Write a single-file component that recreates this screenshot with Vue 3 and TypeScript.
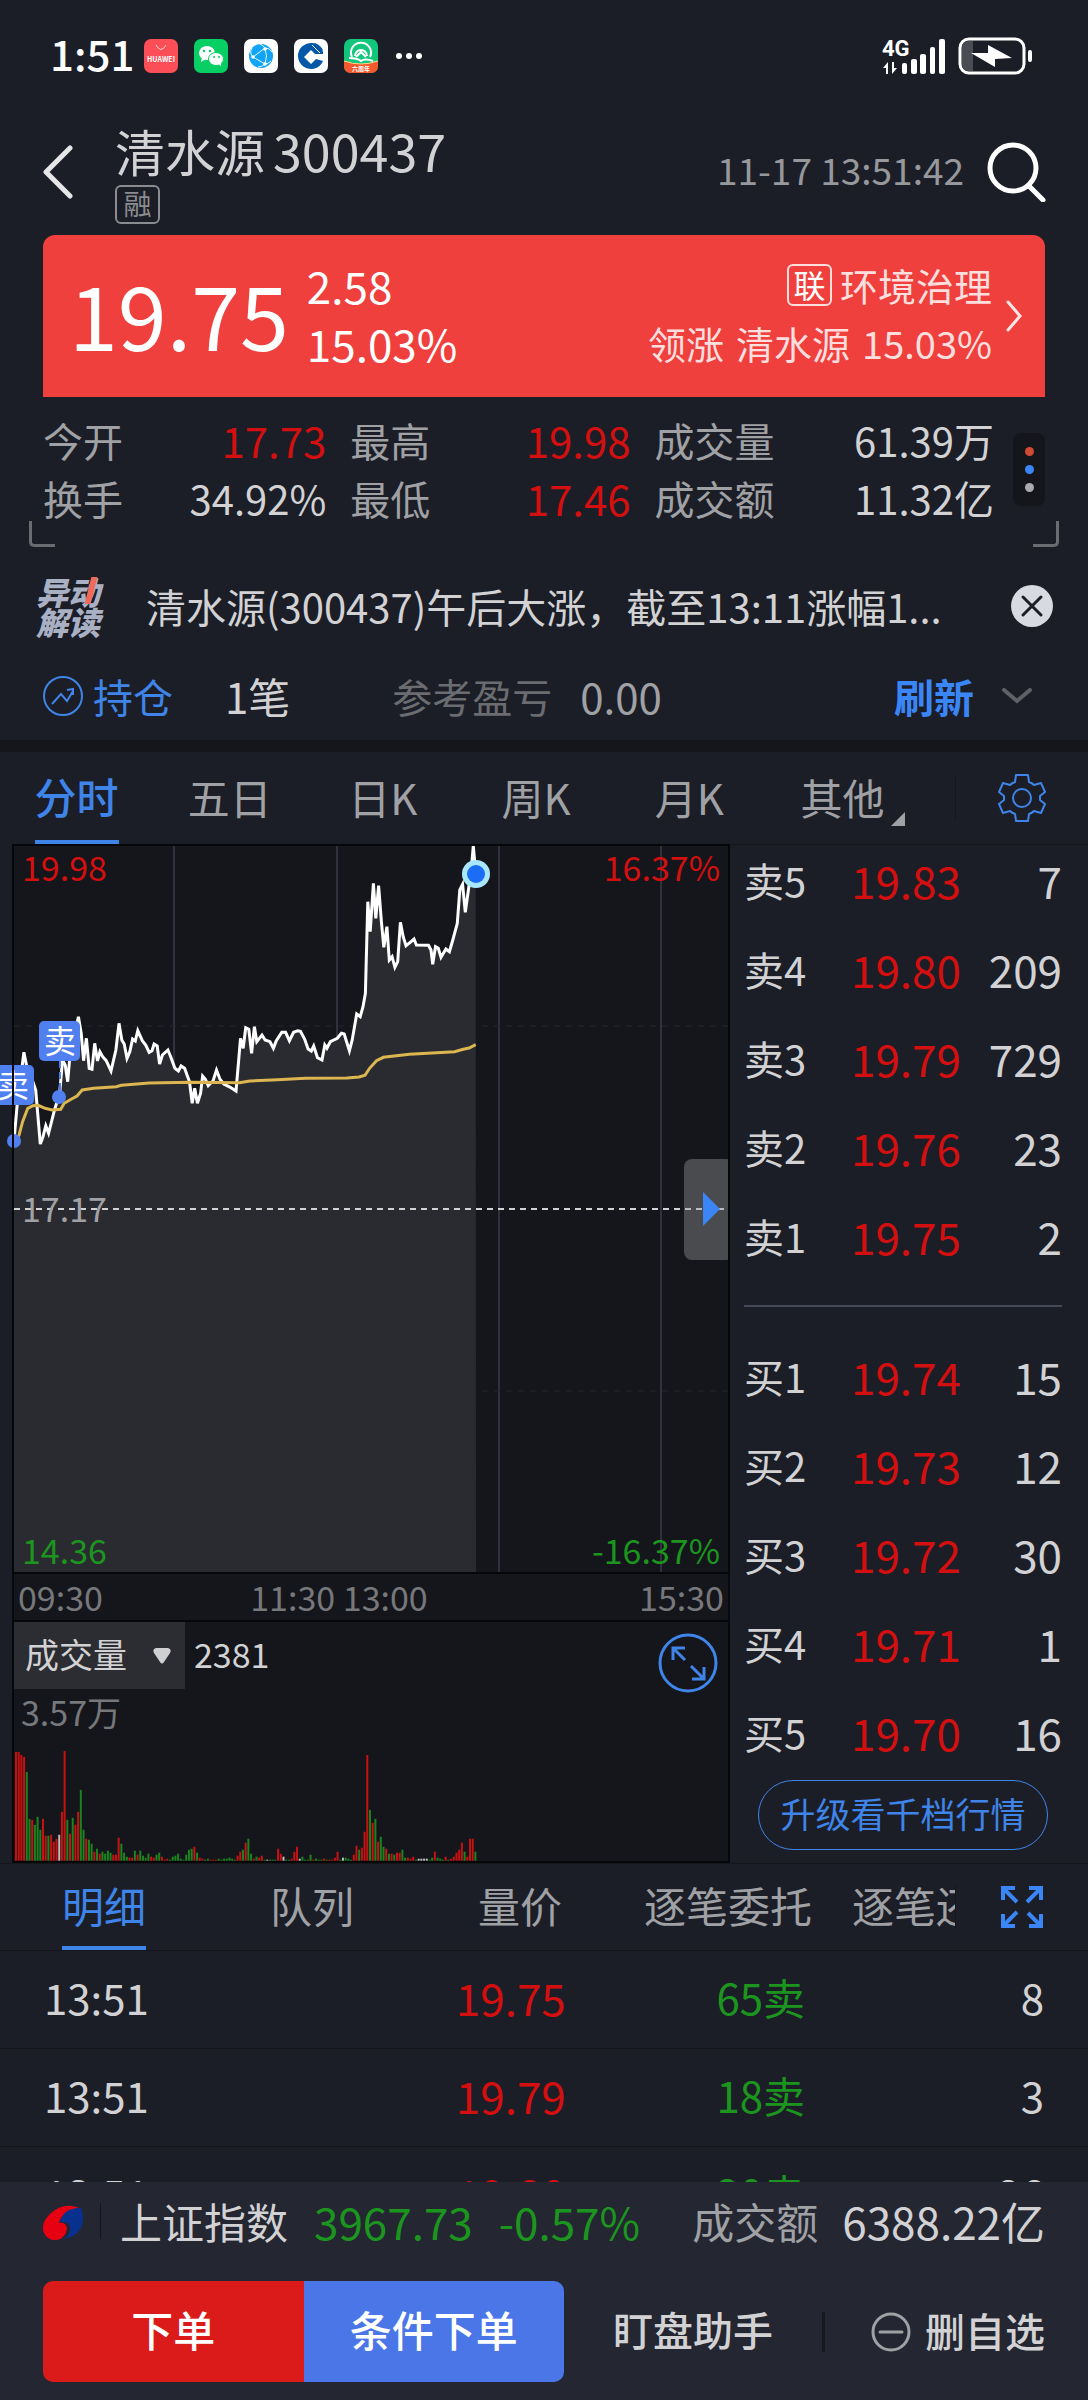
<script setup lang="ts">
import { computed, ref } from 'vue'

interface Stat { label: string; value: string; tone: string }
interface Quote { side: string; price: string; qty: number }
interface Trade { time: string; price: string; volume: string; count: number }
type Point = [number, number]

const stats: Stat[] = [
  { label: '今开', value: '17.73', tone: 'up' },
  { label: '最高', value: '19.98', tone: 'up' },
  { label: '成交量', value: '61.39万', tone: 'plain' },
  { label: '换手', value: '34.92%', tone: 'plain' },
  { label: '最低', value: '17.46', tone: 'up' },
  { label: '成交额', value: '11.32亿', tone: 'plain' },
]

const periods = ['分时', '五日', '日K', '周K', '月K', '其他']
const period = ref('分时')

const detailTabs = ['明细', '队列', '量价', '逐笔委托', '逐笔还原']
const detailTab = ref('明细')

const indicator = ref('成交量')

const sells: Quote[] = [
  { side: '卖5', price: '19.83', qty: 7 },
  { side: '卖4', price: '19.80', qty: 209 },
  { side: '卖3', price: '19.79', qty: 729 },
  { side: '卖2', price: '19.76', qty: 23 },
  { side: '卖1', price: '19.75', qty: 2 },
]
const buys: Quote[] = [
  { side: '买1', price: '19.74', qty: 15 },
  { side: '买2', price: '19.73', qty: 12 },
  { side: '买3', price: '19.72', qty: 30 },
  { side: '买4', price: '19.71', qty: 1 },
  { side: '买5', price: '19.70', qty: 16 },
]

const trades: Trade[] = [
  { time: '13:51', price: '19.75', volume: '65卖', count: 8 },
  { time: '13:51', price: '19.79', volume: '18卖', count: 3 },
  { time: '13:51', price: '19.80', volume: '20卖', count: 26 },
]

// Minute series: horizontal position and depth below the top of the plot
const priceSeries: Point[] = [
  [40, 893], [50, 778], [60, 698], [69, 625], [78, 673], [90, 698], [103, 738], [116, 900], [124, 878], [132, 845],
  [140, 868], [157, 798], [172, 748], [180, 648], [188, 663], [195, 713], [203, 618], [212, 588], [226, 518],
  [234, 568], [241, 650], [249, 583], [257, 673], [265, 676], [273, 598], [281, 651], [288, 623], [296, 638],
  [306, 650], [320, 681], [334, 618], [343, 538], [351, 588], [358, 600], [366, 643], [374, 623], [382, 585],
  [390, 591], [397, 560], [410, 590], [420, 603], [430, 625], [438, 620], [444, 600], [453, 606], [460, 660],
  [468, 633], [484, 618], [492, 638], [504, 673], [514, 681], [522, 666], [532, 673], [540, 696], [546, 713],
  [554, 778], [561, 733], [569, 778], [578, 748], [584, 696], [592, 706], [600, 725], [614, 710], [624, 678],
  [634, 706], [645, 720], [664, 730], [680, 741], [688, 648], [693, 583], [701, 613], [708, 551], [717, 556],
  [725, 628], [733, 548], [740, 593], [755, 573], [764, 588], [778, 593], [788, 613], [796, 591], [812, 565],
  [823, 565], [834, 590], [846, 565], [858, 560], [866, 562], [878, 586], [888, 615], [897, 621], [904, 606],
  [915, 641], [928, 648], [936, 603], [942, 613], [952, 593], [972, 583], [984, 568], [992, 570], [1007, 620],
  [1015, 588], [1028, 510], [1038, 518], [1046, 488], [1053, 448], [1060, 173], [1067, 263], [1076, 118],
  [1083, 223], [1091, 125], [1099, 233], [1106, 310], [1115, 248], [1122, 348], [1130, 338], [1138, 370],
  [1146, 353], [1154, 235], [1162, 278], [1170, 305], [1182, 295], [1193, 285], [1200, 303], [1235, 304],
  [1242, 318], [1247, 361], [1255, 308], [1263, 313], [1271, 340], [1285, 315], [1295, 323], [1305, 288],
  [1318, 238], [1325, 138], [1333, 121], [1341, 205], [1350, 138], [1357, 88], [1364, 6], [1371, 88],
]
const averageSeries: Point[] = [
  [44, 893], [55, 873], [65, 833], [80, 793], [95, 785], [110, 784], [130, 793], [150, 798], [175, 796],
  [185, 778], [205, 766], [222, 756], [237, 738], [270, 733], [335, 728], [350, 724], [430, 717], [550, 715],
  [690, 716], [720, 711], [800, 707], [880, 703], [1000, 702], [1035, 699], [1052, 694], [1065, 673],
  [1085, 650], [1105, 640], [1180, 631], [1310, 623], [1335, 616], [1352, 612], [1371, 602],
]

const toPoints = (series: Point[]) =>
  series.map(([x, y]) => `${(x * 0.347).toFixed(1)},${(y / 3).toFixed(1)}`).join(' ')

const priceLine = computed(() => toPoints(priceSeries))
const averageLine = computed(() => toPoints(averageSeries))
const priceArea = computed(() => `14,728 ${priceLine.value} 476,728`)

// One entry per minute: bar height, then r (up), g (down) or w (flat)
const volumeData =
  '109r 109r 106r 104r 89g 42g 41r 36g 44g 31g 42r 25r 25g 26r 19r 22r 26w 49r 110r 41g 27r 43g 36r 49r 71g 31g ' +
  '22r 21g 17g 9r 12g 7r 9g 7g 10g 8g 6r 6r 23r 17g 8g 4g 3r 3r 10g 6r 10g 5g 3g 7g 4r 3r 6g 8g 4r 1r 2r 1g 4g ' +
  '5g 7g 2g 1g 6g 11g 12g 14r 8g 3r 2r 1g 2g 1r 1r 1r 2g 1g 2g 2g 3g 2g 1g 5r 9r 11g 18r 22g 7g 2r 4g 3r 5r 1g ' +
  '1w 1g 1g 1g 12r 7r 4w 1g 1g 2r 9r 14r 2w 4g 1g 1g 6g 1r 2g 1g 1g 2r 1g 1r 1r 3r 9r 1g 3w 3g 2g 1g 6r 15r 11g ' +
  '13r 29r 106r 51g 38r 42g 19r 24g 14g 12r 7g 7r 6g 8r 8r 11g 3g 3r 2r 4r 1g 2w 2w 2w 2w 1g 3g 9r 3g 2g 1g 4r ' +
  '1g 2r 4r 8r 11r 18r 9g 4r 22r 22r 9g'
const barColors: Record<string, string> = { r: '#c81212', g: '#1c841f', w: '#bdbdbd' }
const bars = volumeData.split(' ').map((item, i) => {
  const height = parseInt(item)
  return { x: 15 + i * 2.71, y: 112 - height, height, fill: barColors[item.slice(-1)] }
})
</script>

<template>
  <div class="screen">
    <div class="status">
      <span class="clock">1:51</span>
      <svg class="app" viewBox="0 0 34 34"><rect width="34" height="34" rx="7" fill="#fb4e57" /><path d="M12 6q5 9 10 0" fill="none" stroke="#ffd9d9" stroke-width="1" /><text x="17" y="23" text-anchor="middle" font-size="7" font-weight="700" fill="#fff">HUAWEI</text></svg>
      <svg class="app" viewBox="0 0 34 34"><rect width="34" height="34" rx="7" fill="#07cf63" /><ellipse cx="13" cy="14" rx="8" ry="7" fill="#fff" /><path d="M8 18l-1 5 5-3z" fill="#fff" /><ellipse cx="22" cy="20" rx="7.500" ry="6.500" fill="#fff" stroke="#07cf63" /><path d="M24 25l3 2v-4z" fill="#fff" /><g fill="#07cf63"><circle cx="10" cy="12" r="1.200" /><circle cx="16" cy="12" r="1.200" /><circle cx="20" cy="18" r="1" /><circle cx="25" cy="18" r="1" /></g></svg>
      <svg class="app" viewBox="0 0 34 34"><rect width="34" height="34" rx="7" fill="#fff" /><circle cx="17" cy="17" r="12" fill="#12a4f5" /><g fill="none" stroke="#e5f6ff" stroke-width="1"><path d="M9 18L21 9Q24 17 21 25L9 18Q5 14 8 9M21 9q5 0 7 4M21 25q3 0 6-3M21 9q-2-3-5-4M21 25q-3 3-7 3" /></g><g fill="#fff"><circle cx="9" cy="18" r="1.800" /><circle cx="21" cy="10" r="1.800" /><circle cx="21" cy="25" r="1.800" /></g></svg>
      <svg class="app" viewBox="0 0 34 34"><rect width="34" height="34" rx="7" fill="#fff" /><path d="M28 10A13 13 0 1 0 29 22L22 20L17 25L10 18L17 11L21 15H29V13z" fill="#0557a7" /><path d="M21 4l8 8M18 6l8 8" stroke="#fff" stroke-width="1" /><path d="M21 4q5 2 8 7l-2 2-8-8z" fill="#0557a7" /></svg>
      <svg class="app" viewBox="0 0 34 34"><rect width="34" height="34" rx="7" fill="#12c77c" /><path d="M0 22q17 6 34 0v5q0 7-7 7H7q-7 0-7-7z" fill="#f4582c" /><path d="M0 22q17 6 34 0" fill="none" stroke="#ffd98a" /><path d="M8 18a10 10 0 1 1 18 0M11 17a6 6 0 0 1 12 0M12 18l5-5 5 5" fill="none" stroke="#fff" stroke-width="2" /><path d="M5 19q8 0 12 3 4-3 12 0" fill="none" stroke="#fff" stroke-width="2" /><text x="17" y="32" text-anchor="middle" font-size="6" font-weight="700" fill="#fff">六周年</text></svg>
      <svg class="more" viewBox="0 0 26 6" fill="#fff"><circle cx="3" cy="3" r="3" /><circle cx="13" cy="3" r="3" /><circle cx="23" cy="3" r="3" /></svg>
      <svg class="signal" viewBox="0 0 64 36"><text class="network" x="0" y="18" fill="#fff">4G</text><g fill="#fff"><path d="M1 30l5-6v12H4v-6zM15 30l-5 6V24h2v6z" /><rect x="20" y="25" width="5" height="11" rx="2" /><rect x="29" y="21" width="6" height="15" rx="2" /><rect x="38" y="16" width="6" height="20" rx="2" /><rect x="48" y="9" width="5" height="27" rx="2" /><rect x="57" y="1" width="6" height="35" rx="2" /></g></svg>
      <svg class="battery" viewBox="0 0 76 38"><rect x="2" y="2" width="64" height="34" rx="9" fill="none" stroke="#fff" stroke-width="3" /><path d="M15 4h-5q-6 0-6 7v16q0 7 6 7h5z" fill="#4a4c54" /><path d="M30 8l24 13-17 1v8L13 16h17z" fill="#fff" /><rect x="70" y="13" width="4" height="12" rx="2" fill="#fff" /></svg>
    </div>

    <header class="header">
      <button class="icon-button" aria-label="返回"><svg width="32" height="54" viewBox="0 0 32 54"><path d="M28 3L4 27l24 24" fill="none" stroke="#e6e6e8" stroke-width="5" stroke-linecap="round" stroke-linejoin="round" /></svg></button>
      <div class="heading">
        <h1>清水源<span class="code">300437</span></h1>
        <span class="badge">融</span>
      </div>
      <time class="stamp">11-17 13:51:42</time>
      <button class="icon-button" aria-label="搜索"><svg width="60" height="60" viewBox="0 0 60 60" fill="none" stroke="#fff"><circle cx="27" cy="26" r="23" stroke-width="5" /><path d="M43 44l14 14" stroke-width="5" stroke-linecap="round" /></svg></button>
    </header>

    <section class="card">
      <strong class="price">19.75</strong>
      <div class="change"><span>2.58</span><span>15.03%</span></div>
      <a class="sector" href="#sector">
        <span class="sector-name"><i>联</i>环境治理</span>
        <span class="leader"><span>领涨</span><span>清水源</span><span>15.03%</span></span>
      </a>
      <svg class="card-arrow" width="17" height="32" viewBox="0 0 17 32"><path d="M2 2l12 14L2 30" fill="none" stroke="#ffe5e5" stroke-width="3" stroke-linecap="round" /></svg>
    </section>

    <section class="stats">
      <dl>
        <div v-for="s in stats" :key="s.label"><dt>{{ s.label }}</dt><dd :class="s.tone">{{ s.value }}</dd></div>
      </dl>
      <button class="dots" aria-label="更多指标"><i class="dot-red"></i><i class="dot-blue"></i><i class="dot-gray"></i></button>
      <span class="corner corner-left"></span>
      <span class="corner corner-right"></span>
    </section>

    <section class="notice">
      <div class="notice-logo"><span>异动</span><span>解读</span></div>
      <p>清水源(300437)午后大涨，截至13:11涨幅1...</p>
      <button class="icon-button" aria-label="关闭"><svg width="44" height="44" viewBox="0 0 44 44"><circle cx="22" cy="22" r="21" fill="#d8dae2" /><path d="M13 13l18 18M31 13L13 31" stroke="#1b1e27" stroke-width="3" stroke-linecap="round" /></svg></button>
    </section>

    <section class="position">
      <svg width="40" height="40" viewBox="0 0 40 40" fill="none" stroke="#3f84e8" stroke-width="2"><circle cx="20" cy="20" r="19" /><path d="M9 28l9-10 6 7 6-10" /><path d="M24 14l6-1v6" /></svg>
      <span class="holding">持仓</span>
      <span class="lots">1笔</span>
      <span class="pl-label">参考盈亏</span>
      <span class="pl">0.00</span>
      <button class="refresh">刷新</button>
      <svg width="32" height="16" viewBox="0 0 32 16"><path d="M3 2l13 11L29 2" fill="none" stroke="#606167" stroke-width="4" stroke-linecap="round" /></svg>
    </section>

    <nav class="tabs">
      <div class="tab-list">
        <button v-for="p in periods" :key="p" :class="{ active: p === period, menu: p === '其他' }" @click="period = p"><span>{{ p }}</span></button>
      </div>
      <button class="tab-tool" aria-label="设置"><svg width="50" height="50" viewBox="0 0 50 50" fill="none" stroke="#3f84e8" stroke-width="2" stroke-linejoin="round"><path d="M19 2h12l1 7q3 1 5 3l7-2 4 9-5 4v4l5 4-4 9-7-2q-2 2-5 3l-1 7H19l-1-7q-3-1-5-3l-7 2-4-9 5-4v-4l-5-4 4-9 7 2q2-2 5-3z" /><circle cx="25" cy="25" r="9" /></svg></button>
    </nav>

    <main class="market">
      <div class="charts">
        <svg class="plot" viewBox="0 0 730 730">
          <rect x="13" y="1" width="716" height="728" fill="#15161b" />
          <path d="M174 1V728M337 1V728M499 1V728M661 1V728" stroke="#30313d" stroke-width="2" />
          <path d="M14 182H728M14 547H728" stroke="#24262a" stroke-dasharray="6 6" />
          <polygon :points="priceArea" fill="#2a2b30" />
          <path d="M14 365H724" stroke="#d2d2d4" stroke-width="2" stroke-dasharray="6 5" />
          <polyline :points="priceLine" fill="none" stroke="#fff" stroke-width="3" />
          <polyline :points="averageLine" fill="none" stroke="#dcb650" stroke-width="3" />
          <path d="M60 217V248" stroke="#5080f0" stroke-width="2" stroke-dasharray="7 4" />
          <g fill="#5080f0"><circle cx="14" cy="297" r="7" /><circle cx="59" cy="253" r="7" /><rect x="39" y="177" width="41" height="40" rx="5" /><rect x="-7" y="221" width="41" height="40" rx="5" /></g>
          <g fill="#fff" font-size="32" text-anchor="middle"><text x="60" y="209">卖</text><text x="13" y="253">卖</text></g>
          <circle cx="476" cy="30" r="14" fill="#a9e7ff" /><circle cx="476" cy="30" r="9" fill="#1b6df5" />
          <rect x="684" y="315" width="50" height="101" rx="8" fill="#9a9a9a" fill-opacity=".4" />
          <path d="M703 348l17 17-17 17z" fill="#3b86f6" />
          <rect x="13" y="1" width="716" height="728" fill="none" stroke="#060709" stroke-width="2" />
          <g font-size="34">
            <text x="22" y="37" fill="#d40f0f">19.98</text>
            <text x="720" y="37" text-anchor="end" fill="#d40f0f">16.37%</text>
            <text x="22" y="378" fill="#a0a1a5">17.17</text>
            <text x="22" y="720" fill="#1c951f">14.36</text>
            <text x="720" y="720" text-anchor="end" fill="#1c951f">-16.37%</text>
          </g>
        </svg>
        <div class="hours"><span>09:30</span><span>11:30 13:00</span><span>15:30</span></div>
        <div class="volume">
          <div class="volume-head">
            <label class="picker">
              <select v-model="indicator" aria-label="指标"><option>成交量</option></select>
              <svg width="18" height="16" viewBox="0 0 18 16"><path d="M3 0h12q4 1 2 5l-6 9q-2 3-4 0L1 5Q-1 1 3 0z" fill="#cfcfd2" /></svg>
            </label>
            <span>2381</span>
            <button class="icon-button expand" aria-label="放大"><svg width="60" height="60" viewBox="0 0 60 60" fill="none" stroke="#3f84e8" stroke-width="3"><circle cx="30" cy="30" r="28" /><path d="M27 27L15 15M15 27V15h12M33 33l13 13M46 34v12H34" /></svg></button>
          </div>
          <span class="volume-max">3.57万</span>
          <svg class="bars" viewBox="0 0 730 112">
            <rect v-for="(b, i) in bars" :key="i" :x="b.x" :y="b.y" width="2" :height="b.height" :fill="b.fill" />
          </svg>
        </div>
      </div>

      <aside class="book">
        <table><tbody>
          <tr v-for="q in sells" :key="q.side"><th scope="row">{{ q.side }}</th><td class="up">{{ q.price }}</td><td>{{ q.qty }}</td></tr>
        </tbody></table>
        <hr>
        <table><tbody>
          <tr v-for="q in buys" :key="q.side"><th scope="row">{{ q.side }}</th><td class="up">{{ q.price }}</td><td>{{ q.qty }}</td></tr>
        </tbody></table>
        <button class="upgrade">升级看千档行情</button>
      </aside>
    </main>

    <nav class="tabs detail-tabs">
      <div class="tab-list">
        <button v-for="t in detailTabs" :key="t" :class="{ active: t === detailTab }" @click="detailTab = t"><span>{{ t }}</span></button>
      </div>
      <button class="tab-tool" aria-label="全屏"><svg width="42" height="42" viewBox="0 0 42 42" fill="none" stroke="#3b86f6" stroke-width="4"><path d="M2 14V2h12M2 2l14 14M28 2h12v12M40 2L26 16M2 28v12h12M2 40l14-14M40 28v12H28M40 40L27 27" /></svg></button>
    </nav>

    <div class="trades">
      <table><tbody>
        <tr v-for="(t, i) in trades" :key="i"><td>{{ t.time }}</td><td class="up">{{ t.price }}</td><td class="down">{{ t.volume }}</td><td>{{ t.count }}</td></tr>
      </tbody></table>
    </div>

    <footer class="footer">
      <div class="index">
        <svg width="40" height="36" viewBox="0 0 40 36"><path d="M39 4Q22-4 8 8-3 18 1 28q4 8 13 7 9-2 10-12-1-6-8-5Q19 5 39 4z" fill="#e60012" /><path d="M38 3Q21 2 17 17q10-1 10 6 0 8-7 11 19-3 20-20 0-7-2-11z" fill="#08308f" /></svg>
        <span class="index-name">上证指数</span>
        <span class="down index-value">3967.73</span>
        <span class="down index-change">-0.57%</span>
        <span class="index-label">成交额</span>
        <span>6388.22亿</span>
      </div>
      <div class="actions">
        <button class="order">下单</button>
        <button class="conditional">条件下单</button>
        <button class="assistant">盯盘助手</button>
        <button class="remove"><svg width="40" height="40" viewBox="0 0 40 40" fill="none" stroke="#a0a1a5" stroke-width="3"><circle cx="20" cy="20" r="18" /><path d="M9 20h22" stroke-linecap="round" /></svg><span>删自选</span></button>
      </div>
    </footer>
  </div>
</template>

<style>
body { background: #1b1e27; }
</style>

<style scoped>
.screen { display: flex; flex-direction: column; height: 100vh; overflow: hidden; background: #1b1e27; color: #d2d2d4; font: 400 42px/58px "Noto Sans CJK SC", "Noto Sans", sans-serif; }
.screen * { box-sizing: border-box; }
.screen > * { flex: none; }
svg { display: block; flex: none; }
button { padding: 0; border: 0; background: none; color: inherit; font: inherit; white-space: nowrap; }
.up { color: #d40f0f; }
.down { color: #1c951f; }

.status { display: flex; align-items: center; height: 112px; padding: 0 54px 0 50px; }
.clock { width: 94px; padding-bottom: 6px; color: #fff; font-size: 42px; font-weight: 500; }
.app { width: 34px; height: 34px; margin-right: 16px; }
.more { width: 26px; height: 6px; margin-left: 2px; }
.signal { width: 64px; height: 36px; margin-left: auto; overflow: visible; }
.network { font-family: Roboto, sans-serif; font-size: 22px; font-weight: 700; }
.battery { width: 76px; height: 38px; margin-left: 12px; }

.header { display: flex; align-items: center; height: 123px; padding: 0 42px 3px; }
.heading { margin-left: 41px; }
h1 { display: flex; align-items: baseline; gap: 8px; margin: 0; font-size: 50px; font-weight: 400; line-height: 58px; }
.code { font-size: 52px; }
.badge { display: block; width: 45px; height: 39px; margin-top: 6px; border: 2px solid #8b8c91; border-radius: 6px; color: #8b8c91; font-size: 28px; line-height: 33px; text-align: center; }
.stamp { margin-left: auto; margin-right: 22px; padding-bottom: 6px; color: #97989c; font-size: 37px; }

.card { display: flex; align-items: center; height: 162px; margin: 0 43px; padding: 0 22px 0 26px; border-radius: 12px 12px 0 0; background: #ef403d; color: #fff; }
.price { padding-bottom: 6px; font-size: 88px; font-weight: 400; line-height: 116px; }
.change { display: flex; flex-direction: column; margin-left: 18px; padding-bottom: 4px; font-size: 44px; }
.sector { display: flex; flex-direction: column; align-items: flex-end; margin-left: auto; padding-bottom: 4px; color: #ffdede; font-size: 38px; text-decoration: none; }
.sector-name { display: flex; align-items: center; gap: 8px; }
.sector-name i { width: 45px; height: 42px; border: 2px solid #ffdede; border-radius: 6px; color: #fff; font-size: 32px; font-style: normal; line-height: 36px; text-align: center; }
.leader { display: flex; gap: 12px; }
.card-arrow { margin-left: 14px; }

.stats { position: relative; display: flex; align-items: center; justify-content: space-between; padding: 14px 43px 20px; font-size: 40px; }
.stats dl { display: grid; flex: 1; grid-template-columns: 283fr 280fr 339fr; column-gap: 24px; margin: 0 19px 0 0; }
.stats dl div { display: flex; justify-content: space-between; }
.stats dt { color: #a0a1a5; }
.stats dd { margin: 0; }
.stats .up { font-size: 42px; }
.dots { display: flex; flex-direction: column; align-items: center; gap: 9px; width: 32px; padding: 14px 0; border-radius: 8px; background: #15161b; }
.dots i { width: 9px; height: 9px; border-radius: 50%; }
.dot-red { background: #d04a35; }
.dot-blue { background: #3b86f6; }
.dot-gray { background: #a9aaae; }
.corner { position: absolute; bottom: 0; width: 26px; height: 26px; border-bottom: 3px solid #6b6c72; }
.corner-left { left: 29px; border-left: 3px solid #6b6c72; border-bottom-left-radius: 5px; }
.corner-right { right: 29px; border-right: 3px solid #6b6c72; border-bottom-right-radius: 5px; }

.notice { display: flex; align-items: center; height: 118px; padding: 0 34px 0 36px; font-size: 40px; }
.notice-logo { position: relative; display: flex; flex-direction: column; width: 66px; color: #aab0c4; font-size: 32px; font-style: italic; font-weight: 900; line-height: 30px; }
.notice-logo::after { position: absolute; top: 1px; right: 8px; width: 6px; height: 27px; background: #ef6a5c; content: ""; transform: skewX(-14deg); }
.notice p { flex: 1; min-width: 0; margin: 0 56px 0 44px; overflow: hidden; white-space: nowrap; }

.position { display: flex; align-items: center; height: 87px; padding: 0 55px 13px 43px; border-bottom: 12px solid #15161b; font-size: 40px; }
.holding { margin-left: 10px; color: #3f84e8; }
.lots { margin-left: 52px; font-size: 42px; }
.pl-label { margin-left: 102px; color: #6b6c70; }
.pl { margin-left: 28px; color: #a0a1a5; font-size: 42px; }
.refresh { margin-left: auto; margin-right: 27px; color: #3b86f6; font-weight: 700; }

.tabs { display: flex; align-items: center; height: 92px; color: #a0a1a5; }
.tab-list { display: flex; flex: 1; height: 100%; padding-right: 36px; overflow: hidden; }
.tab-list button { position: relative; flex: 1 0 0; padding-bottom: 2px; }
.tab-list .active { padding: 0; color: #3f84e8; font-weight: 500; }
.tab-list .active span { display: block; width: 84px; height: 100%; margin: 0 auto; border-bottom: 4px solid #3f84e8; line-height: 88px; }
.menu::after { position: absolute; right: 14px; bottom: 18px; border-bottom: 14px solid #a0a1a5; border-left: 14px solid transparent; content: ""; }
.tab-tool { display: flex; align-items: center; justify-content: center; width: 133px; height: 44px; border-left: 1px solid #14161b; }

.market { display: grid; grid-template-columns: 730fr 358fr; }
.plot { width: 100%; height: auto; }
.hours { display: flex; justify-content: space-between; height: 46px; margin-left: 12px; padding: 0 4px; border: solid #08090c; border-width: 0 2px; background: #15161b; color: #77787c; font-size: 34px; line-height: 45px; }
.hours span:nth-child(2) { margin-right: 64px; }
.volume { display: flex; flex-direction: column; height: 243px; margin-left: 12px; border: 2px solid #060709; background: #15161b; font-size: 34px; }
.volume-head { display: flex; align-items: center; height: 67px; }
.picker { display: flex; align-items: center; justify-content: space-between; width: 171px; height: 67px; padding: 0 14px 0 11px; background: #2c2d32; }
.picker select { padding: 0 0 4px; border: 0; appearance: none; background: none; color: inherit; font: inherit; }
.volume-head > span { margin-left: 9px; padding-bottom: 4px; }
.expand { margin: 14px 10px 0 auto; }
.volume-max { padding-left: 7px; color: #77787c; line-height: 46px; }
.bars { width: calc(100% + 14px); height: auto; margin: auto 0 0 -14px; }

.book { display: flex; flex-direction: column; padding: 0 26px 0 14px; border-top: 1px solid #14161b; }
.book table { display: block; }
.book tbody { display: flex; flex-direction: column; gap: 11px; }
.book tr { display: flex; align-items: center; height: 78px; padding-bottom: 8px; font-size: 44px; }
.book th { width: 107px; padding: 0; font-size: 40px; font-weight: 400; text-align: left; }
.book td { padding: 0; }
.book td:last-child { flex: 1; text-align: right; }
.book hr { width: 100%; height: 2px; margin: 26px 0 34px; border: 0; background: #444858; }
.upgrade { height: 70px; margin: 5px 14px 0; padding-bottom: 4px; border: 1px solid #3f84e8; border-radius: 35px; color: #3f84e8; font-size: 35px; }

.detail-tabs { height: 88px; border: solid #14161b; border-width: 1px 0; }
.detail-tabs .tab-list { padding: 0; }
.detail-tabs .tab-list button { flex: 0 0 208px; padding-bottom: 4px; }
.detail-tabs .tab-list .active { padding: 0; font-weight: 400; }
.detail-tabs .tab-list .active span { line-height: 82px; }

.screen > .trades { flex: 1 1 0; min-height: 0; overflow: hidden; }
.trades table { width: 100%; border-spacing: 0; table-layout: fixed; }
.trades td { height: 98px; padding: 0 0 5px; border-bottom: 1px solid #14161b; text-align: right; }
.trades td:first-child { width: 25%; padding-left: 44px; text-align: left; }
.trades td:nth-child(2) { width: 27%; font-size: 44px; }
.trades td:nth-child(3) { width: 22%; }
.trades td:last-child { padding-right: 44px; }

.footer { height: 218px; padding: 0 43px; background: #242632; }
.index { display: flex; align-items: center; height: 82px; font-size: 44px; white-space: nowrap; }
.index > span { margin-bottom: 4px; }
.index-name { margin-left: 17px; padding-left: 19px; border-left: 1px solid #14161b; font-size: 42px; line-height: 36px; }
.index-value { margin-left: 26px; }
.index-change { margin-left: 26px; }
.index-label { margin-left: auto; margin-right: 24px; color: #a0a1a5; font-size: 42px; }
.actions { display: flex; align-items: center; margin-top: 17px; font-size: 40px; font-weight: 500; }
.actions button { height: 101px; padding-bottom: 6px; }
.actions .order, .actions .conditional { flex: 0 0 26%; color: #fff; font-size: 42px; }
.order { border-radius: 10px 0 0 10px; background: #db1a1a; }
.conditional { border-radius: 0 10px 10px 0; background: #4b76e8; }
.assistant { flex: 1; }
.actions .remove { display: flex; align-items: center; gap: 14px; height: 40px; padding: 0 0 0 46px; border-left: 3px solid #17181e; }
.remove span { padding-bottom: 4px; }
</style>
